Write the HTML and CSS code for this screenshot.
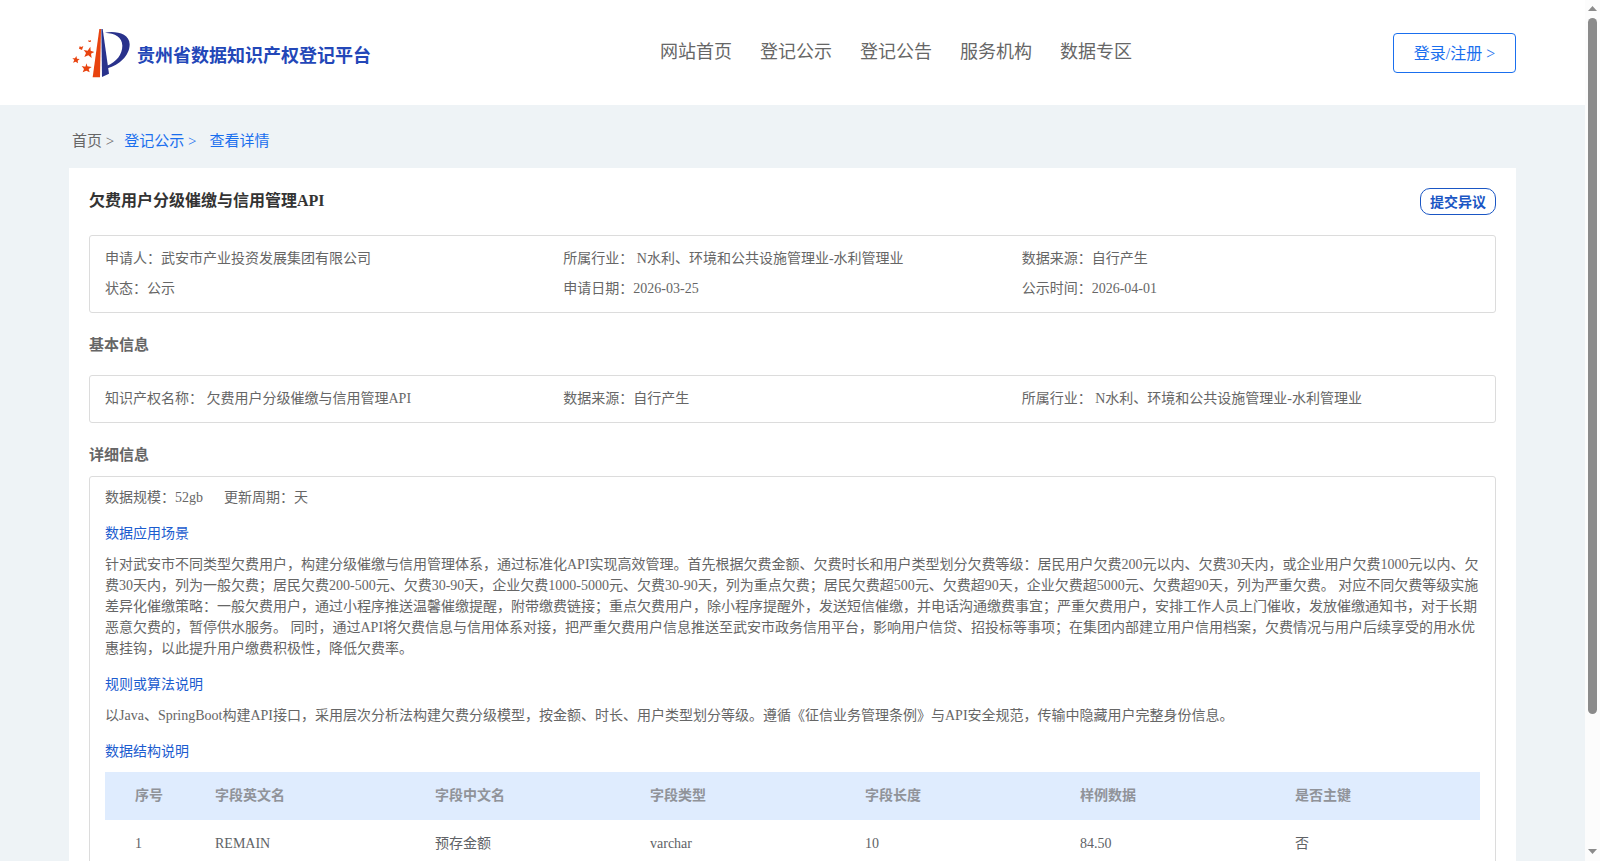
FILE: index.html
```html
<!DOCTYPE html>
<html lang="zh-CN">
<head>
    <meta charset="UTF-8">
    <meta name="viewport" content="width=device-width, initial-scale=1.0">
    <title>贵州省数据知识产权登记平台</title>
    <link rel="stylesheet" href="styles.css">
</head>
<body>

<div class="page">
    <header class="header">
        <div class="logo">
            <svg class="logo-icon" viewBox="36 36 177 153">
                <g fill="#e8430f">
                    <path d="M118 42H123L120 187H98z"/>
                    <path d="M91 95L92 107L103 111L93 116L95 129L85 121L73 126L78 114L71 105L83 107z"/>
                    <path d="M49 123L51 131L59 132L53 137L54 145L47 140L39 143L43 135L37 130L45 130z"/>
                    <path d="M80 145L82 154L95 156L86 162L89 172L79 167L68 172L72 162L65 153L76 155z"/>
                    <path d="M59 94L64 96L70 93L68 99L66 105L61 103L57 101z"/>
                    <path d="M85 75L89 77L93 75L92 81L86 81z"/>
                </g>
                <g fill="#29328c">
                    <path d="M124 42H128L147 176L126 186z"/>
                    <path d="M135 53C166 47 209 55 209 88C209 122 178 150 143 160L141 152C169 141 187 118 187 92C187 66 165 55 135 53z"/>
                </g>
            </svg>
            <span class="logo-text">贵州省数据知识产权登记平台</span>
        </div>
        <nav class="nav">
            <a>网站首页</a>
            <a>登记公示</a>
            <a>登记公告</a>
            <a>服务机构</a>
            <a>数据专区</a>
        </nav>
        <button class="login-btn">登录/注册 &gt;</button>
    </header>

    <main class="container">
        <div class="breadcrumb">
            <span>首页 &gt;</span>
            <a class="crumb-list">登记公示 &gt;</a>
            <a class="crumb-detail">查看详情</a>
        </div>

        <div class="card">
            <div class="card-head">
                <h1>欠费用户分级催缴与信用管理API</h1>
                <button class="objection-btn">提交异议</button>
            </div>

            <div class="info-box summary">
                <div>申请人：武安市产业投资发展集团有限公司</div>
                <div>所属行业： N水利、环境和公共设施管理业-水利管理业</div>
                <div>数据来源：自行产生</div>
                <div>状态：公示</div>
                <div>申请日期：2026-03-25</div>
                <div>公示时间：2026-04-01</div>
            </div>

            <h2 class="basic-title">基本信息</h2>
            <div class="info-box basic">
                <div>知识产权名称： 欠费用户分级催缴与信用管理API</div>
                <div>数据来源：自行产生</div>
                <div>所属行业： N水利、环境和公共设施管理业-水利管理业</div>
            </div>

            <h2 class="detail-title">详细信息</h2>
            <div class="detail-box">
                <div class="scale"><span>数据规模：52gb</span><span>更新周期：天</span></div>

                <h3>数据应用场景</h3>
                <p>针对武安市不同类型欠费用户，构建分级催缴与信用管理体系，通过标准化API实现高效管理。首先根据欠费金额、欠费时长和用户类型划分欠费等级：居民用户欠费200元以内、欠费30天内，或企业用户欠费1000元以内、欠费30天内，列为一般欠费；居民欠费200-500元、欠费30-90天，企业欠费1000-5000元、欠费30-90天，列为重点欠费；居民欠费超500元、欠费超90天，企业欠费超5000元、欠费超90天，列为严重欠费。 对应不同欠费等级实施差异化催缴策略：一般欠费用户，通过小程序推送温馨催缴提醒，附带缴费链接；重点欠费用户，除小程序提醒外，发送短信催缴，并电话沟通缴费事宜；严重欠费用户，安排工作人员上门催收，发放催缴通知书，对于长期恶意欠费的，暂停供水服务。 同时，通过API将欠费信息与信用体系对接，把严重欠费用户信息推送至武安市政务信用平台，影响用户信贷、招投标等事项；在集团内部建立用户信用档案，欠费情况与用户后续享受的用水优惠挂钩，以此提升用户缴费积极性，降低欠费率。</p>

                <h3>规则或算法说明</h3>
                <p>以Java、SpringBoot构建API接口，采用层次分析法构建欠费分级模型，按金额、时长、用户类型划分等级。遵循《征信业务管理条例》与API安全规范，传输中隐藏用户完整身份信息。</p>

                <h3>数据结构说明</h3>
                <table class="field-table">
                    <thead>
                        <tr>
                            <th class="col-index">序号</th>
                            <th class="col-name">字段英文名</th>
                            <th>字段中文名</th>
                            <th>字段类型</th>
                            <th>字段长度</th>
                            <th>样例数据</th>
                            <th>是否主键</th>
                        </tr>
                    </thead>
                    <tbody>
                        <tr>
                            <td>1</td>
                            <td>REMAIN</td>
                            <td>预存金额</td>
                            <td>varchar</td>
                            <td>10</td>
                            <td>84.50</td>
                            <td>否</td>
                        </tr>
                    </tbody>
                </table>
            </div>
        </div>
    </main>
</div>

<div class="scrollbar">
    <svg width="9" height="5" viewBox="0 0 9 5"><path d="M4.5 0L9 5H0z"/></svg>
    <div class="thumb"></div>
    <svg class="arrow-down" width="9" height="5" viewBox="0 0 9 5"><path d="M0 0H9L4.5 5z"/></svg>
</div>

</body>
</html>
```
FILE: styles.css
```css
* {
    box-sizing: border-box;
}
body {
    margin: 0;
    height: 100vh;
    display: flex;
    overflow: hidden;
    font-family: "Liberation Serif", "Noto Sans CJK SC", serif;
    font-size: 14px;
    color: #666;
    background-color: #eef3f6;
}
h1, h2, h3, p {
    margin: 0;
}
button {
    font-family: inherit;
    background-color: #fff;
    padding: 0 0 2px;
    cursor: pointer;
}
.page {
    flex: 1;
    height: 100vh;
    overflow: hidden;
}

/* header */
.header {
    height: 105px;
    padding: 0 69px 0 72px;
    display: grid;
    grid-template-columns: 588px 1fr auto;
    align-items: center;
    background-color: #fff;
}
.logo {
    display: flex;
    align-items: center;
    gap: 6px;
}
.logo-icon {
    width: 59px;
    height: 51px;
}
.logo-text {
    font-size: 18px;
    font-weight: bold;
    line-height: 26px;
    padding-top: 6px;
    color: #2347b8;
}
.nav {
    display: flex;
    gap: 28px;
    font-size: 18px;
    line-height: 26px;
    padding-bottom: 2px;
}
.login-btn {
    width: 123px;
    height: 40px;
    border: 1px solid #1a6fee;
    border-radius: 4px;
    font-size: 16px;
    color: #1a6fee;
}

/* content */
.container {
    margin: 0 69px;
}
.breadcrumb {
    display: flex;
    height: 63px;
    padding: 6px 3px 0;
    align-items: center;
    font-size: 15px;
}
.breadcrumb a {
    color: #1a6fee;
}
.crumb-list {
    margin-left: 10px;
}
.crumb-detail {
    margin-left: 13px;
}
.card {
    height: 900px;
    padding: 20px;
    background-color: #fff;
}
.card-head {
    display: flex;
    justify-content: space-between;
    height: 47px;
}
.card-head h1 {
    font-size: 16px;
    line-height: 26px;
    color: #333;
}
.objection-btn {
    width: 76px;
    height: 27px;
    border: 1px solid #1a56c4;
    border-radius: 10px;
    font-size: 14px;
    font-weight: bold;
    color: #1a56c4;
}
.info-box {
    display: grid;
    grid-template-columns: repeat(3, 1fr);
    border: 1px solid #dcdcdc;
    border-radius: 3px;
    line-height: 30px;
}
.summary {
    height: 78px;
    padding: 8px 15px;
}
.basic {
    height: 48px;
    padding: 8px 15px;
}
.card h2 {
    font-size: 15px;
    line-height: 22px;
}
.card .basic-title {
    padding: 21px 0 19px;
}
.card .detail-title {
    padding: 21px 0 10px;
}
.detail-box {
    height: 600px;
    padding: 10px 15px;
    border: 1px solid #dcdcdc;
    border-radius: 3px;
    line-height: 21px;
}
.scale {
    display: flex;
    gap: 21px;
}
.detail-box h3 {
    margin: 15px 0 10px;
    font-size: 14px;
    font-weight: normal;
    color: #1b5ccf;
}
.field-table {
    width: 100%;
    border-collapse: collapse;
    table-layout: fixed;
}
.field-table th, .field-table td {
    height: 48px;
    padding: 0 0 2px 30px;
    text-align: left;
}
.field-table th {
    background-color: #dfecfe;
    color: #909399;
}
.field-table td {
    color: #606266;
}
.col-index {
    width: 80px;
}
.col-name {
    width: 220px;
}

/* page scrollbar */
.scrollbar {
    width: 15px;
    padding: 6px 0 7px;
    display: flex;
    flex-direction: column;
    align-items: center;
    background-color: #fcfcfc;
    fill: #8b8b8b;
}
.thumb {
    width: 9px;
    height: 696px;
    margin-top: 7px;
    border-radius: 5px;
    background-color: #8b8b8b;
}
.arrow-down {
    margin-top: auto;
}
```
